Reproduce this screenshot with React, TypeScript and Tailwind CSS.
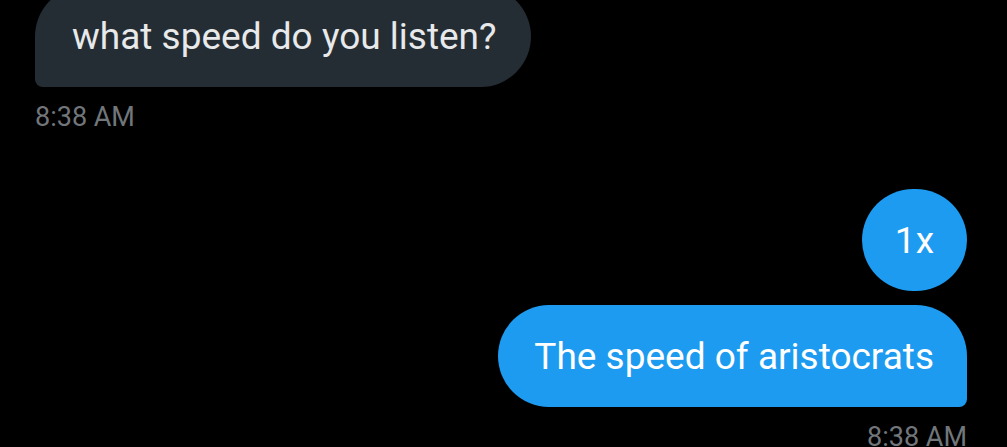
import React from "react";

export default function App() {
  const font = { fontFamily: "Roboto, 'Noto Sans', sans-serif" };
  return (
    <div className="w-[1007px] h-[447px] overflow-hidden bg-black" style={font}>
      <div className="flex flex-col pl-[35px] pr-[40px]">
        <div className="flex justify-start mt-[-14px]">
          <div className="h-[101px] flex items-center pl-[37px] pr-[34px] rounded-[51px] rounded-bl-[8px] bg-[#252d34] text-[#e7e9ea] text-[37px] leading-none">
            what speed do you listen?
          </div>
        </div>
        <div className="mt-[17px] text-[27px] leading-none text-[#71767b]">8:38 AM</div>
        <div className="flex justify-end mt-[58px]">
          <div className="h-[102px] flex items-center px-[33px] rounded-full bg-[#1d9bf0] text-white text-[37px] leading-none">
            1x
          </div>
        </div>
        <div className="flex justify-end mt-[14px]">
          <div className="h-[102px] flex items-center pl-[36px] pr-[33px] rounded-[51px] rounded-br-[8px] bg-[#1d9bf0] text-white text-[37px] leading-none">
            The speed of aristocrats
          </div>
        </div>
        <div className="flex justify-end mt-[17px] text-[27px] leading-none text-[#71767b]">8:38 AM</div>
      </div>
    </div>
  );
}
